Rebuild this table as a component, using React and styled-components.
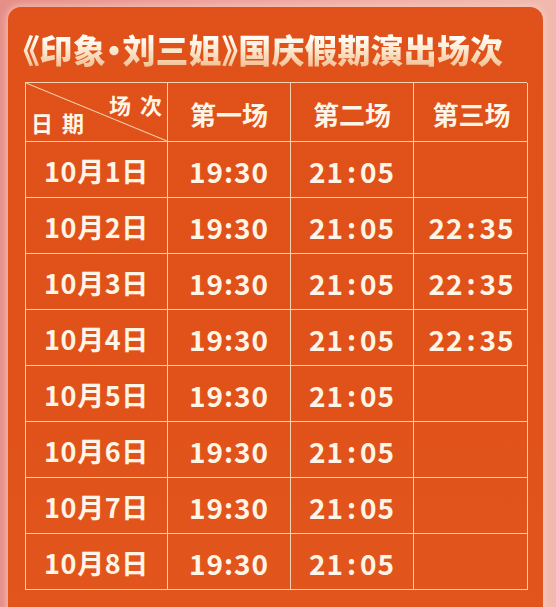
import React from 'react';
import styled, { createGlobalStyle } from 'styled-components';

const rows = [
  ['10月1日', '19:30', '21:05', ''],
  ['10月2日', '19:30', '21:05', '22:35'],
  ['10月3日', '19:30', '21:05', '22:35'],
  ['10月4日', '19:30', '21:05', '22:35'],
  ['10月5日', '19:30', '21:05', ''],
  ['10月6日', '19:30', '21:05', ''],
  ['10月7日', '19:30', '21:05', ''],
  ['10月8日', '19:30', '21:05', ''],
];

const GlobalStyle = createGlobalStyle`
  * { box-sizing: border-box; }
  body {
    margin: 0;
    font-family: "Noto Sans CJK SC", "Noto Sans", sans-serif;
  }
`;

// the second and third shows have a wider colon in the picture
const Time = ({ value, wide }) => {
  if (!value) return null;
  const [h, m] = value.split(':');
  return (
    <>
      {h}
      <SColon $wide={wide}>:</SColon>
      {m}
    </>
  );
};

const App = () => {
  return (
    <SPage>
      <GlobalStyle />
      <SCard>
        <STitle>《印象·刘三姐》国庆假期演出场次</STitle>
        <STable>
          <SCornerCell>
            <span className="top">场次</span>
            <span className="bottom">日期</span>
          </SCornerCell>
          <SHeadCell>第一场</SHeadCell>
          <SHeadCell>第二场</SHeadCell>
          <SHeadCell $last>第三场</SHeadCell>
          {rows.map((row) =>
            row.map((v, i) =>
              i === 0 ? (
                <SDateCell key={row[0]}>{v}</SDateCell>
              ) : (
                <SCell key={row[0] + i} $last={i === 3}>
                  <Time value={v} wide={i > 1} />
                </SCell>
              )
            )
          )}
        </STable>
      </SCard>
    </SPage>
  );
};

const line = '#f6d2b0';

const SPage = styled.div`
  width: 556px;
  height: 607px;
  overflow: hidden;
  padding: 7px 0 0 8px;
  background: linear-gradient(to right, #e58f88 0%, #ec9e96 30%, #f0b0a6 70%, #f1b9ae 100%);
`;

const SCard = styled.div`
  width: 535px;
  height: 640px;
  padding: 19px 16px 0 17px;
  border-radius: 13px;
  background: linear-gradient(to bottom, #e0511b, #e05219 60%, #e2561d);
  box-shadow: 0 0 6px 2px rgba(255, 214, 200, 0.55);
`;

const STitle = styled.h1`
  margin: 0 0 10px -2px;
  height: 46px;
  font-size: 33px;
  line-height: 46px;
  font-weight: 900;
  white-space: nowrap;
  font-feature-settings: "palt";
  letter-spacing: 0.1px;
  background: linear-gradient(to bottom, #fffef8 25%, #fbe6cc 55%, #f2be92 90%);
  -webkit-background-clip: text;
  background-clip: text;
  color: transparent;
`;

const STable = styled.div`
  display: grid;
  grid-template-columns: 142px 123px 123px 114px;
  grid-template-rows: 59px repeat(8, 56px);
  width: 502px;
  border-top: 1.5px solid ${line};
  border-left: 1.5px solid ${line};
`;

const SCellBase = styled.div`
  display: flex;
  align-items: center;
  justify-content: center;
  border-right: 1.5px solid ${line};
  border-bottom: 1.5px solid ${line};
  color: #fff5e6;
  font-weight: 700;
  white-space: nowrap;
`;

const SHeadCell = styled(SCellBase)`
  font-size: 26px;
  padding-top: 2px;
  padding-left: ${(p) => (p.$last ? '2px' : '0')};
`;

const SDateCell = styled(SCellBase)`
  font-size: 27px;
  letter-spacing: 0.6px;
  padding-top: 2px;
`;

const SCell = styled(SCellBase)`
  font-size: 28px;
  letter-spacing: 1px;
  padding-top: 2px;
  padding-left: ${(p) => (p.$last ? '2px' : '0')};
`;

const SColon = styled.span`
  margin: 0 ${(p) => (p.$wide ? '3px' : '0')};
`;

const SCornerCell = styled(SCellBase)`
  position: relative;
  display: block;
  background: linear-gradient(
    to top right,
    transparent calc(50% - 1px),
    ${line} 50%,
    transparent calc(50% + 1px)
  );
  font-size: 22px;
  letter-spacing: 9px;

  span {
    position: absolute;
    line-height: 1;
  }
  .top {
    top: 10px;
    right: -4px;
  }
  .bottom {
    left: 5px;
    bottom: 8px;
  }
`;

export default App;
